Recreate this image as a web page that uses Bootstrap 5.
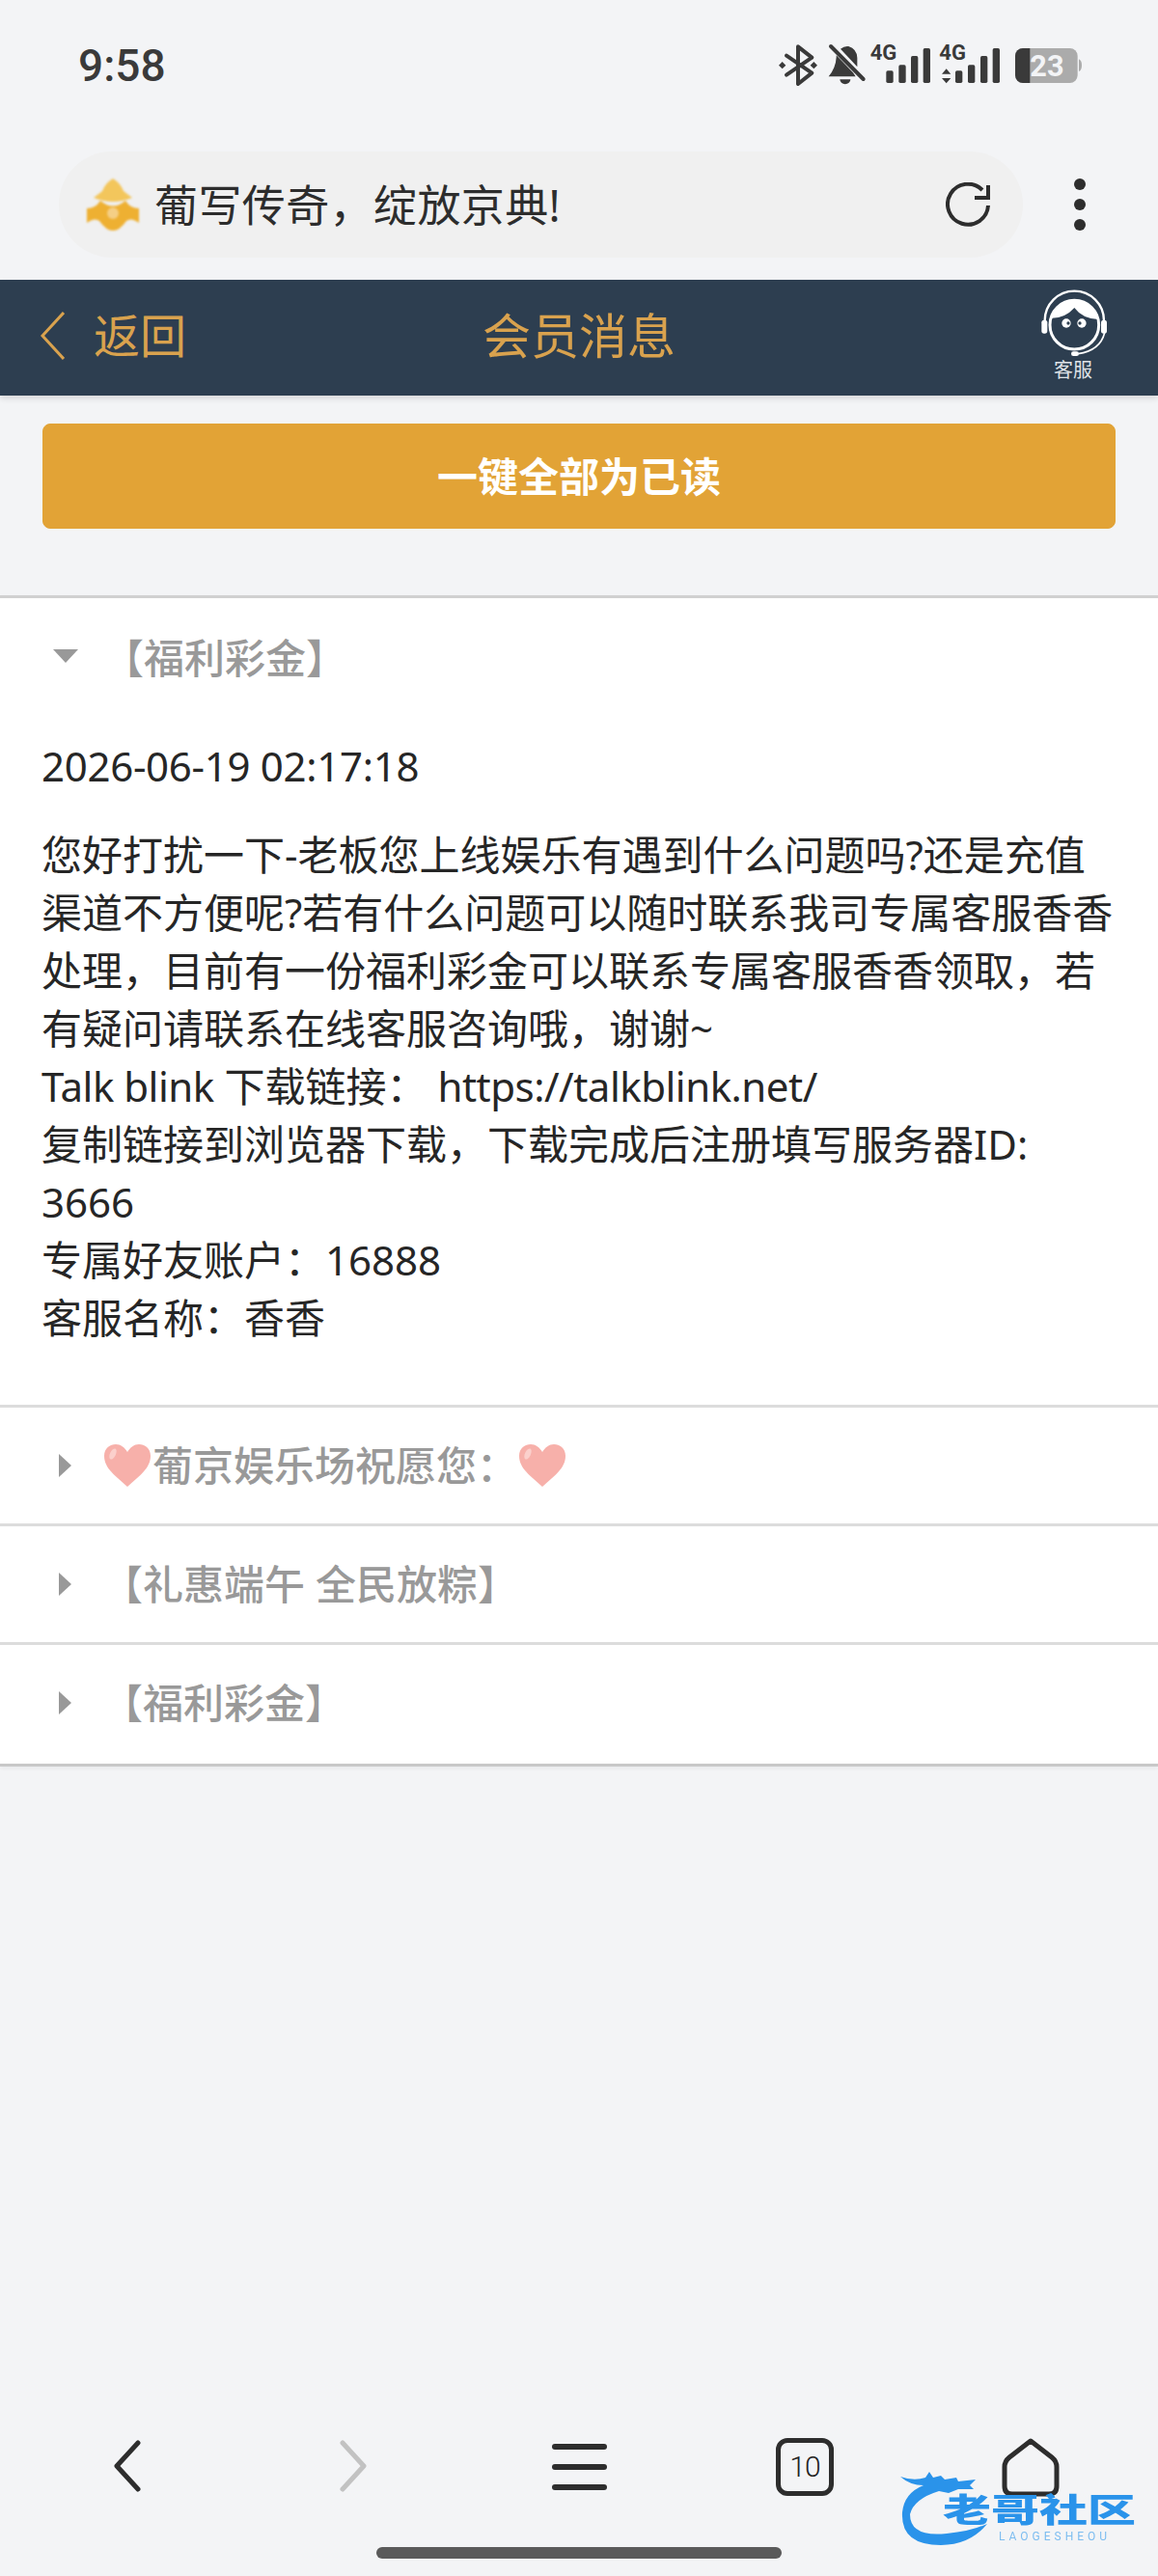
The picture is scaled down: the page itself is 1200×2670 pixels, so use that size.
<!DOCTYPE html>
<html lang="zh-CN">

<head>
    <meta charset="UTF-8">
    <meta name="viewport" content="width=device-width, initial-scale=1.0">
    <title>会员消息</title>
    <link rel="stylesheet" href="https://cdn.jsdelivr.net/npm/bootstrap@5.3.2/dist/css/bootstrap.min.css">
    <style>
        body {
            font-family: "Noto Sans", "Noto Sans CJK SC", sans-serif;
            background: #f3f4f6;
            min-height: 2670px;
            color: #2b2b2b;
        }

        /* Barra del sistema y del navegador */
        .status-row { padding: 20px 50px 0 81px; height: 157px; }
        .clock-text { font-family: Roboto, sans-serif; font-size: 46px; font-weight: 500; color: #3a3a3a; line-height: 96px; }
        .status-icons { display: block; width: 350px; height: 100px; }
        .browser-row { height: 133px; padding: 0 0 23px 61px; }
        .url-pill { width: 999px; height: 110px; background: #f0f0f0; border-radius: 55px; padding: 0 34px 0 29px; }
        .url-text { font-size: 45px; line-height: 1; margin-left: 16px; color: #2d2d2d; letter-spacing: .4px; }
        .dots-menu { width: 118px; padding-top: 19px; }
        .dots-menu i { display: block; width: 12px; height: 12px; border-radius: 50%; background: #2d2d2d; margin: 9px auto; }

        /* Cabecera de la página */
        .page-header { height: 120px; background: #2d3e50; color: #d9a24e; box-shadow: 0 3px 6px rgba(0, 0, 0, .12); }
        .header-side { flex: 1 1 0; }
        .back-link { font-size: 48px; padding-left: 42px; gap: 30px; margin-top: -4px; }
        .page-title { font-size: 50px; line-height: 1; margin-top: -4px; }
        .service-box { width: 110px; margin-right: 30px; color: #dfe3e7; font-size: 20px; line-height: 20px; text-align: center; padding-top: 5px; }
        .service-text { padding: 4px 6px 0 0; }

        .read-wrap { padding: 29px 44px 69px; }
        .read-btn {
            height: 109px; background: #e2a336; border-color: #e2a336; color: #fff;
            font-size: 42px; font-weight: 700; border-radius: 8px; line-height: 1; padding-top: 6px;
        }

        /* Lista de mensajes */
        .msg-list { border-bottom: 3px solid #c8c8c8; box-shadow: 0 2px 4px rgba(0, 0, 0, .05); }
        .msg-row { background: #fff; border-top: 3px solid #dcdcdc; }
        .msg-row:first-child { border-top-color: #d0d0d0; }
        .msg-row:last-child { padding-bottom: 3px; }
        .msg-head { height: 120px; padding-left: 61px; color: #999; font-size: 42px; line-height: 60px; font-weight: 500; }
        .msg-open .msg-head { height: 92px; padding-top: 32px; align-items: flex-start !important; }
        .msg-open .msg-head .tri-open { margin-top: 21px; }
        .tri-closed { width: 0; height: 0; border-left: 13px solid #999; border-top: 12px solid transparent; border-bottom: 12px solid transparent; margin-right: 32px; }
        .tri-open { width: 0; height: 0; border-top: 14px solid #999; border-left: 13px solid transparent; border-right: 13px solid transparent; margin: 0 26px 0 -6px; }
        .heart-icon { width: 52px; height: 46px; display: inline-block; vertical-align: -7px; }
        .msg-body { padding: 52px 43px 60px; font-size: 42px; line-height: 60px; color: #262626; }
        .msg-date { margin-bottom: 32px; letter-spacing: -.3px; }
        .latin-tight { letter-spacing: -.5px; }

        /* Barra inferior */
        .bottom-bar { padding: 0 15px; height: 83px; }
        .bottom-bar > div { width: 234px; }
        .nav-arrow { margin-top: 2px; }
        .nav-lines { margin-top: 4px; }
        .tabs-box { width: 60px; height: 60px; border: 5px solid #2d2d2d; border-radius: 12px; font-family: Roboto, sans-serif; font-size: 30px; font-weight: 300; letter-spacing: -1px; line-height: 1; color: #222; }
        .home-pill { width: 420px; height: 12px; background: #5a5a5a; border-radius: 6px; margin: 0 auto; }
        .pill-wrap { padding-top: 30px; height: 60px; }

        .watermark { position: absolute; left: 933px; top: 2560px; width: 250px; height: 80px; filter: blur(.7px); }
        .mark-name {
            position: absolute; left: 44px; top: 25px; font-family: Roboto, "Noto Sans CJK SC", sans-serif; font-size: 50px; line-height: 34px; font-weight: 900; white-space: nowrap;
            color: #2a93ea; transform: scaleY(.68); transform-origin: center left;
        }
        .mark-latin { position: absolute; left: 102px; top: 63px; font-family: Roboto, sans-serif; font-size: 12px; line-height: 12px; letter-spacing: 4px; color: #7dbdf0; white-space: nowrap; }
    </style>
</head>

<body class="d-flex flex-column position-relative">
    <!-- Barra de estado -->
    <div class="status-row d-flex justify-content-between align-items-start">
        <div class="clock-text">9:58</div>
        <svg class="status-icons" viewBox="120 0 1050 300">
            <g fill="none" stroke="#3a3a3a" stroke-width="12" stroke-linejoin="round" stroke-linecap="round">
                <path d="M165 113 L244 167 L201 201 V85 L244 119 L165 173" />
                <path d="M303 84 L404 186" />
            </g>
            <path d="M152 132 l11 11 -11 11 -11 -11z M250 132 l11 11 -11 11 -11 -11z" fill="#3a3a3a" />
            <path d="M296 178 Q318 152 320 118 L320 112 L372 166 L380 178Z M333 92 Q345 82 358 84 Q384 92 385 120 L385 148Z" fill="#3a3a3a" />
            <path d="M331 187 h33 a16 14 0 0 1 -33 0z" fill="#3a3a3a" />
            <g fill="#3a3a3a" font-family="Roboto, sans-serif" font-weight="700" font-size="66">
                <text x="425" y="125">4G</text>
                <text x="640" y="125">4G</text>
            </g>
            <g fill="#3a3a3a">
                <rect x="475" y="160" width="22" height="38" rx="5" />
                <rect x="514" y="142" width="22" height="56" rx="5" />
                <rect x="552" y="114" width="22" height="84" rx="5" />
                <rect x="590" y="90" width="22" height="108" rx="5" />
                <path d="M662 154 l14 16 h-28z M662 199 l14 -16 h-28z" />
                <rect x="690" y="160" width="22" height="38" rx="5" />
                <rect x="729" y="142" width="22" height="56" rx="5" />
                <rect x="768" y="114" width="22" height="84" rx="5" />
                <rect x="806" y="90" width="22" height="108" rx="5" />
            </g>
            <path d="M900 90 H1046 a24 24 0 0 1 24 24 V174 a24 24 0 0 1 -24 24 H900 a24 24 0 0 1 -24 -24 V114 a24 24 0 0 1 24 -24z" fill="#ababab" />
            <path d="M1074 124 q9 4 9 19 t-9 19z" fill="#ababab" />
            <path d="M900 90 H922 V198 H900 a24 24 0 0 1 -24 -24 V114 a24 24 0 0 1 24 -24z" fill="#3a3a3a" />
            <text x="922" y="177" fill="#f3f4f6" font-family="Roboto, sans-serif" font-weight="700" font-size="92">23</text>
        </svg>
    </div>

    <!-- Barra del navegador -->
    <div class="browser-row d-flex align-items-start">
        <div class="url-pill d-flex align-items-center">
            <svg width="54" height="54" viewBox="0 0 54 54" style="filter: blur(1px)">
                <path d="M27 0 Q35 5 38 13 L47 20 Q27 28 7 20 L16 13 Q19 5 27 0Z" fill="#f3c65c" />
                <path d="M0 31 Q9 31 14 23 Q27 34 40 23 Q45 31 54 31 V46 Q46 40 41 44 Q34 54 27 54 Q20 54 13 44 Q8 40 0 46Z" fill="#eeb032" />
                <circle cx="27" cy="36" r="6" fill="#f5cf86" />
            </svg>
            <span class="url-text">葡写传奇，绽放京典!</span>
            <svg class="ms-auto" width="46" height="46" viewBox="0 0 46 46" fill="none" stroke="#2d2d2d" stroke-width="4">
                <path d="M44 24 A21 21 0 1 1 38 8" />
                <path d="M44 3 V16 H30" />
            </svg>
        </div>
        <div class="dots-menu"><i></i><i></i><i></i></div>
    </div>

    <!-- Cabecera -->
    <header class="page-header d-flex align-items-center">
        <div class="header-side">
            <div class="back-link d-flex align-items-center">
                <svg width="25" height="50" viewBox="0 0 25 50" fill="none" stroke="#d9a24e" stroke-width="3">
                    <path d="M24 1 L2 25 L24 49" />
                </svg>
                <span>返回</span>
            </div>
        </div>
        <div class="page-title">会员消息</div>
        <div class="header-side d-flex justify-content-end align-self-start">
            <div class="service-box">
                <svg class="d-block" width="110" height="75" viewBox="0 0 330 225">
                    <path d="M68 112 A92 92 0 0 1 252 112" fill="none" stroke="#fff" stroke-width="7" />
                    <circle cx="160" cy="125" r="76" fill="#2d3e50" stroke="#fff" stroke-width="9" />
                    <path d="M86 104 Q130 106 160 72 Q185 106 234 108 Q215 50 160 49 Q105 50 86 104Z" fill="#fff" />
                    <circle cx="135" cy="120" r="14" fill="#fff" />
                    <circle cx="183" cy="120" r="14" fill="#fff" />
                    <circle cx="141" cy="120" r="5" fill="#2d3e50" />
                    <circle cx="177" cy="120" r="5" fill="#2d3e50" />
                    <rect x="58" y="110" width="18" height="42" rx="8" fill="#fff" />
                    <rect x="243" y="110" width="18" height="42" rx="8" fill="#fff" />
                    <path d="M254 150 Q240 205 172 215" fill="none" stroke="#fff" stroke-width="5" />
                    <rect x="150" y="208" width="24" height="14" rx="7" fill="#fff" />
                </svg>
                <div class="text-nowrap service-text">客服</div>
            </div>
        </div>
    </header>

    <div class="read-wrap">
        <button type="button" class="btn read-btn w-100">一键全部为已读</button>
    </div>

    <!-- Mensajes -->
    <div class="msg-list">
        <div class="msg-row msg-open">
            <div class="msg-head d-flex align-items-center">
                <span class="tri-open"></span>
                <span>【福利彩金】</span>
            </div>
            <div class="msg-body">
                <div class="msg-date">2026-06-19 02:17:18</div>
                <div>您好打扰一下-老板您上线娱乐有遇到什么问题吗?还是充值渠道不方便呢?若有什么问题可以随时联系我司专属客服香香处理，目前有一份福利彩金可以联系专属客服香香领取，若有疑问请联系在线客服咨询哦，谢谢~<br>
                    <span class="latin-tight">Talk blink</span> 下载链接： <span class="latin-tight">https://talkblink.net/</span><br>
                    复制链接到浏览器下载，下载完成后注册填写服务器ID: 3666<br>
                    专属好友账户：16888<br>
                    客服名称：香香</div>
            </div>
        </div>
        <div class="msg-row">
            <div class="msg-head d-flex align-items-center">
                <span class="tri-closed"></span>
                <span><svg class="heart-icon" viewBox="0 0 52 46"><path d="M26 45 C14 34 2 26 2 13 C2 5 8 1 14 1 C19 1 23 4 26 9 C29 4 33 1 38 1 C44 1 50 5 50 13 C50 26 38 34 26 45Z" fill="#f7b0aa" /><ellipse cx="11" cy="11" rx="3" ry="6" transform="rotate(25 11 11)" fill="#fbd0cc" /></svg>葡京娱乐场祝愿您：<svg class="heart-icon" viewBox="0 0 52 46"><path d="M26 45 C14 34 2 26 2 13 C2 5 8 1 14 1 C19 1 23 4 26 9 C29 4 33 1 38 1 C44 1 50 5 50 13 C50 26 38 34 26 45Z" fill="#f7b0aa" /><ellipse cx="11" cy="11" rx="3" ry="6" transform="rotate(25 11 11)" fill="#fbd0cc" /></svg></span>
            </div>
        </div>
        <div class="msg-row">
            <div class="msg-head d-flex align-items-center">
                <span class="tri-closed"></span>
                <span>【礼惠端午 全民放粽】</span>
            </div>
        </div>
        <div class="msg-row">
            <div class="msg-head d-flex align-items-center">
                <span class="tri-closed"></span>
                <span>【福利彩金】</span>
            </div>
        </div>
    </div>

    <!-- Barra inferior -->
    <div class="mt-auto">
        <nav class="bottom-bar d-flex align-items-start">
            <div class="d-flex justify-content-center">
                <svg class="nav-arrow" width="28" height="54" viewBox="0 0 28 54" fill="none" stroke="#2d2d2d" stroke-width="5" stroke-linecap="round" stroke-linejoin="round">
                    <path d="M25 3 L3 27 L25 51" />
                </svg>
            </div>
            <div class="d-flex justify-content-center">
                <svg class="nav-arrow" width="28" height="54" viewBox="0 0 28 54" fill="none" stroke="#c2c2c2" stroke-width="5" stroke-linecap="round" stroke-linejoin="round">
                    <path d="M3 3 L25 27 L3 51" />
                </svg>
            </div>
            <div class="d-flex justify-content-center">
                <svg class="nav-lines" width="57" height="54" viewBox="0 0 57 54" fill="#2d2d2d">
                    <rect y="2" width="57" height="6" rx="3" />
                    <rect y="23" width="57" height="6" rx="3" />
                    <rect y="44" width="57" height="6" rx="3" />
                </svg>
            </div>
            <div class="d-flex justify-content-center">
                <div class="tabs-box d-flex align-items-center justify-content-center">10</div>
            </div>
            <div class="d-flex justify-content-center">
                <svg width="60" height="62" viewBox="0 0 60 62" fill="none" stroke="#2d2d2d" stroke-width="5" stroke-linejoin="round">
                    <path d="M30 3 L52 20 Q57 24 57 30 V50 Q57 58 49 58 H11 Q3 58 3 50 V30 Q3 24 8 20Z" />
                </svg>
            </div>
        </nav>
        <div class="pill-wrap"><div class="home-pill"></div></div>
    </div>

    <!-- Marca de agua -->
    <div class="watermark">
        <svg class="position-absolute top-0 start-0" width="130" height="80" viewBox="0 0 130 80">
            <path d="M0 7 Q14 12 26 8 L30 2 L34 8 L42 6 L46 10 L58 8 L60 12 L78 10 L72 16 L76 20 L60 20 L50 24 L40 22 Q14 30 10 46 Q10 70 48 66 Q72 64 90 56 Q72 78 42 78 Q0 78 2 44 Q4 24 24 16 Q10 16 0 7Z" fill="#2a93ea" />
        </svg>
        <div class="mark-name">老哥社区</div>
        <div class="mark-latin">LAOGESHEOU</div>
    </div>
</body>

</html>
